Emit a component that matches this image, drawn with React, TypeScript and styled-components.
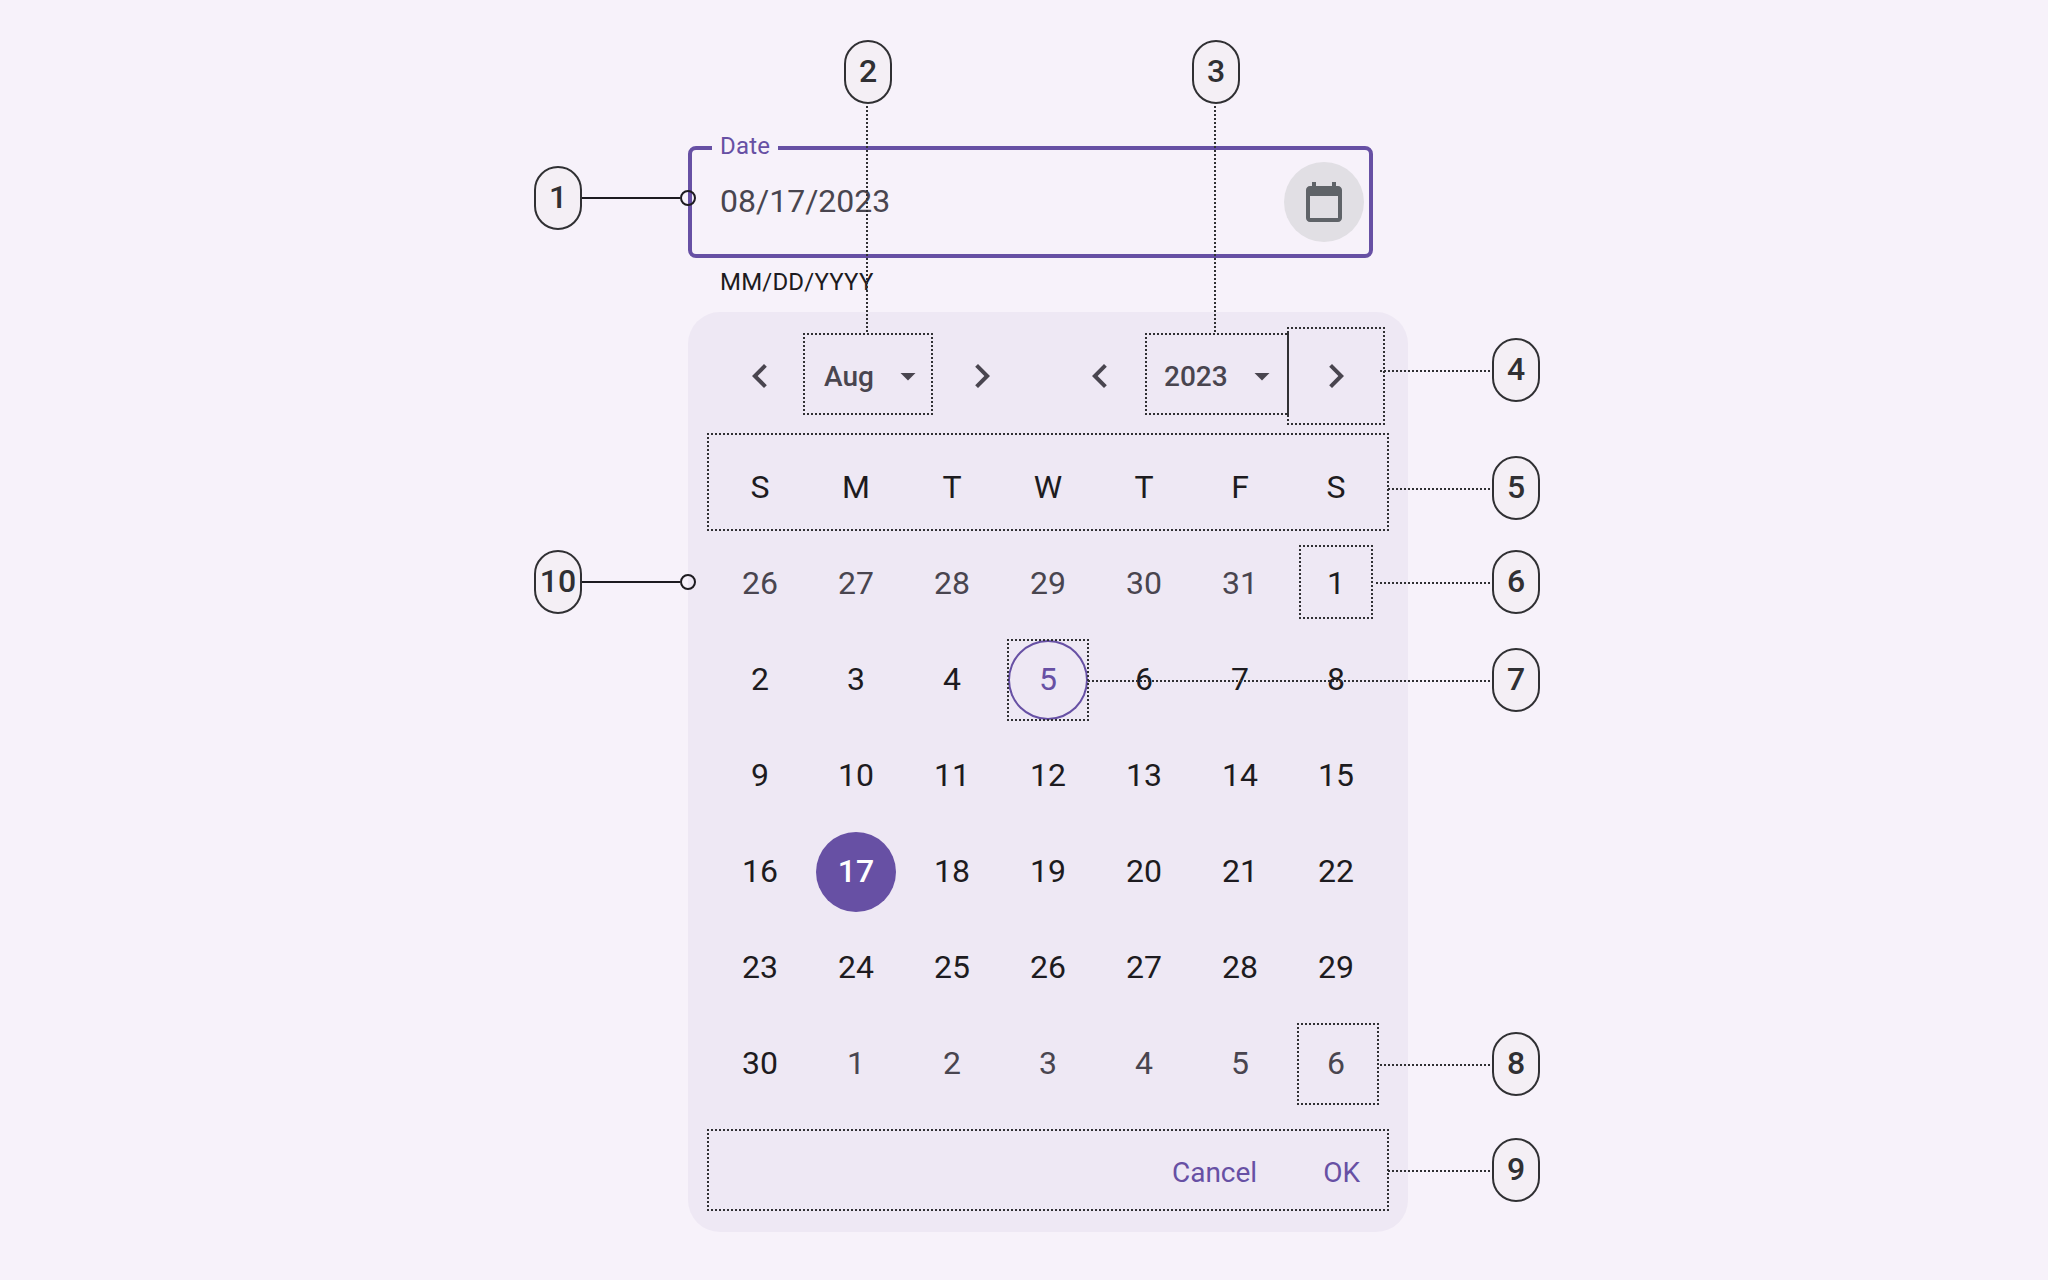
import React from "react";
import styled, { createGlobalStyle, css } from "styled-components";

const color = {
  page: "#f7f2fa",
  panel: "#eee8f4",
  primary: "#6750a4",
  text: "#1d1b20",
  muted: "#49454f",
  note: "#303033",
  badge: "#f4eff5",
  hover: "#e1dfe4",
  icon: "#5f6368",
};

const GlobalStyle = createGlobalStyle`
  *, *::before, *::after { box-sizing: border-box; }
  body { margin: 0; background: ${color.page}; }
`;

const Page = styled.main`
  position: relative;
  width: 2048px;
  height: 1280px;
  padding: 146px 0 0 688px;
  overflow: hidden;
  background: ${color.page};
  color: ${color.text};
  font-family: Roboto, "Liberation Sans", sans-serif;
  font-size: 32px;
`;

const Field = styled.div`
  position: relative;
  display: flex;
  align-items: center;
  justify-content: space-between;
  width: 685px;
  height: 112px;
  padding: 0 5px 0 28px;
  border: 4px solid ${color.primary};
  border-radius: 8px;
`;

const FieldLabel = styled.label`
  position: absolute;
  top: -20px;
  left: 20px;
  width: 66px;
  padding-left: 8px;
  background: ${color.page};
  color: ${color.primary};
  font-size: 24px;
  line-height: 32px;
  letter-spacing: 0.2px;
`;

const FieldValue = styled.span`
  color: ${color.muted};
  line-height: 48px;
  padding-bottom: 2px;
`;

const CalendarButton = styled.button`
  display: grid;
  place-items: center;
  width: 80px;
  height: 80px;
  padding: 4px 0 0;
  border: 0;
  border-radius: 50%;
  background: ${color.hover};
  color: ${color.icon};
`;

const HelperText = styled.div`
  height: 54px;
  padding: 8px 0 0 32px;
  font-size: 24px;
  line-height: 32px;
  letter-spacing: 0.2px;
`;

const Panel = styled.section`
  display: flex;
  flex-direction: column;
  width: 720px;
  height: 920px;
  padding: 0 24px;
  border-radius: 32px;
  background: ${color.panel};
`;

const PanelHeader = styled.header`
  display: flex;
  gap: 22px;
  height: 128px;
`;

const Stepper = styled.div`
  display: flex;
  align-items: center;
`;

const StepButton = styled.button`
  display: grid;
  place-items: center;
  width: 96px;
  height: 96px;
  padding: 0;
  border: 0;
  background: none;
  color: ${color.muted};
`;

const MenuButton = styled.button<{ $width: number }>`
  display: flex;
  align-items: center;
  justify-content: space-between;
  width: ${(p) => p.$width}px;
  height: 80px;
  padding: 0 8px 0 16px;
  border: 0;
  background: none;
  color: ${color.muted};
  font: 500 28px/40px Roboto, "Liberation Sans", sans-serif;
`;

const MenuLabel = styled.span`
  padding-top: 2px;
`;

const Grid = styled.div`
  display: grid;
  grid-template-columns: repeat(7, 96px);
  grid-auto-rows: 96px;
`;

type DayState = "normal" | "outside" | "today" | "selected";

const Day = styled.div<{ $state?: DayState }>`
  display: grid;
  place-items: center;
  width: 80px;
  height: 80px;
  margin: 8px;
  padding-bottom: 2px;
  border-radius: 50%;
  line-height: 48px;
  ${(p) => p.$state === "outside" && css`color: ${color.muted};`}
  ${(p) =>
    p.$state === "today" &&
    css`
      color: ${color.primary};
      box-shadow: inset 0 0 0 2px ${color.primary};
    `}
  ${(p) =>
    p.$state === "selected" &&
    css`
      background: ${color.primary};
      color: #fff;
      font-weight: 500;
    `}
`;

const Actions = styled.footer`
  display: flex;
  align-items: center;
  justify-content: flex-end;
  gap: 66px;
  height: 120px;
  padding: 2px 24px 0 0;
`;

const TextButton = styled.button`
  padding: 0;
  border: 0;
  background: none;
  color: ${color.primary};
  font: 400 28px/40px Roboto, "Liberation Sans", sans-serif;
`;

const Callouts = styled.svg`
  position: absolute;
  inset: 0;
  pointer-events: none;
`;

const Badge = styled.span<{ $x: number; $y: number }>`
  position: absolute;
  left: ${(p) => p.$x}px;
  top: ${(p) => p.$y}px;
  display: flex;
  align-items: center;
  justify-content: center;
  width: 48px;
  height: 64px;
  padding-bottom: 3px;
  border: 2px solid ${color.note};
  border-radius: 24px;
  background: ${color.badge};
  color: ${color.note};
  font-weight: 500;
  line-height: 40px;
`;

const paths = {
  calendar:
    "M19 3h-1V1h-2v2H8V1H6v2H5c-1.11 0-2 .9-2 2v14c0 1.1.89 2 2 2h14c1.1 0 2-.9 2-2V5c0-1.1-.9-2-2-2zm0 16H5V8h14v11z",
  left: "M15.41 7.41 14 6l-6 6 6 6 1.41-1.41L10.83 12z",
  right: "M10 6 8.59 7.41 13.17 12l-4.58 4.59L10 18l6-6z",
  drop: "M7 10l5 5 5-5z",
};

const Icon = ({ name, size = 48 }: { name: keyof typeof paths; size?: number }) => (
  <svg width={size} height={size} viewBox="0 0 24 24" fill="currentColor" aria-hidden>
    <path d={paths[name]} />
  </svg>
);

const weekdays = ["S", "M", "T", "W", "T", "F", "S"];

const days: { label: number; state: DayState }[] = [
  ...[26, 27, 28, 29, 30, 31].map((label) => ({ label, state: "outside" as DayState })),
  ...Array.from({ length: 30 }, (_, i) => ({
    label: i + 1,
    state: (i + 1 === 5 ? "today" : i + 1 === 17 ? "selected" : "normal") as DayState,
  })),
  ...[1, 2, 3, 4, 5, 6].map((label) => ({ label, state: "outside" as DayState })),
];

const badges = [
  { n: 1, x: 534, y: 166 },
  { n: 2, x: 844, y: 40 },
  { n: 3, x: 1192, y: 40 },
  { n: 4, x: 1492, y: 338 },
  { n: 5, x: 1492, y: 456 },
  { n: 6, x: 1492, y: 550 },
  { n: 7, x: 1492, y: 648 },
  { n: 8, x: 1492, y: 1032 },
  { n: 9, x: 1492, y: 1138 },
  { n: 10, x: 534, y: 550 },
];

// Outlined regions: x, y, width, height
const regions = [
  [804, 334, 128, 80],
  [1146, 334, 142, 80],
  [1288, 328, 96, 96],
  [708, 434, 680, 96],
  [1300, 546, 72, 72],
  [1008, 640, 80, 80],
  [1298, 1024, 80, 80],
  [708, 1130, 680, 80],
];

const leaders = [
  "M867 106V334",
  "M1215 106V334",
  "M1380 371H1490",
  "M1388 489H1490",
  "M1376 583H1490",
  "M1088 681H1490",
  "M1380 1065H1490",
  "M1388 1171H1490",
];

export default function App() {
  return (
    <>
      <GlobalStyle />
      <Page>
        <Field>
          <FieldLabel>Date</FieldLabel>
          <FieldValue>08/17/2023</FieldValue>
          <CalendarButton aria-label="Open calendar">
            <Icon name="calendar" />
          </CalendarButton>
        </Field>
        <HelperText>MM/DD/YYYY</HelperText>

        <Panel>
          <PanelHeader>
            <Stepper>
              <StepButton><Icon name="left" /></StepButton>
              <MenuButton $width={126}>
                <MenuLabel>Aug</MenuLabel>
                <Icon name="drop" size={36} />
              </MenuButton>
              <StepButton><Icon name="right" /></StepButton>
            </Stepper>
            <Stepper>
              <StepButton><Icon name="left" /></StepButton>
              <MenuButton $width={140}>
                <MenuLabel>2023</MenuLabel>
                <Icon name="drop" size={36} />
              </MenuButton>
              <StepButton><Icon name="right" /></StepButton>
            </Stepper>
          </PanelHeader>
          <Grid>
            {weekdays.map((d, i) => (
              <Day key={i}>{d}</Day>
            ))}
            {days.map((d, i) => (
              <Day key={i} $state={d.state}>{d.label}</Day>
            ))}
          </Grid>
          <Actions>
            <TextButton>Cancel</TextButton>
            <TextButton>OK</TextButton>
          </Actions>
        </Panel>

        <Callouts width="2048" height="1280" fill="none" strokeWidth="2">
          <g stroke={color.note} strokeDasharray="2 2">
            {regions.map(([x, y, w, h]) => (
              <path key={`${x}-${y}`} d={`M${x - 1} ${y}H${x + w + 1}M${x - 1} ${y + h}H${x + w + 1}M${x} ${y - 1}V${y + h + 1}M${x + w} ${y - 1}V${y + h + 1}`} />
            ))}
            {leaders.map((d) => (
              <path key={d} d={d} />
            ))}
          </g>
          <g stroke={color.text}>
            <path d="M582 198H680M582 582H680" />
            <circle cx="688" cy="198" r="7" />
            <circle cx="688" cy="582" r="7" />
          </g>
        </Callouts>
        {badges.map((b) => (
          <Badge key={b.n} $x={b.x} $y={b.y}>{b.n}</Badge>
        ))}
      </Page>
    </>
  );
}
